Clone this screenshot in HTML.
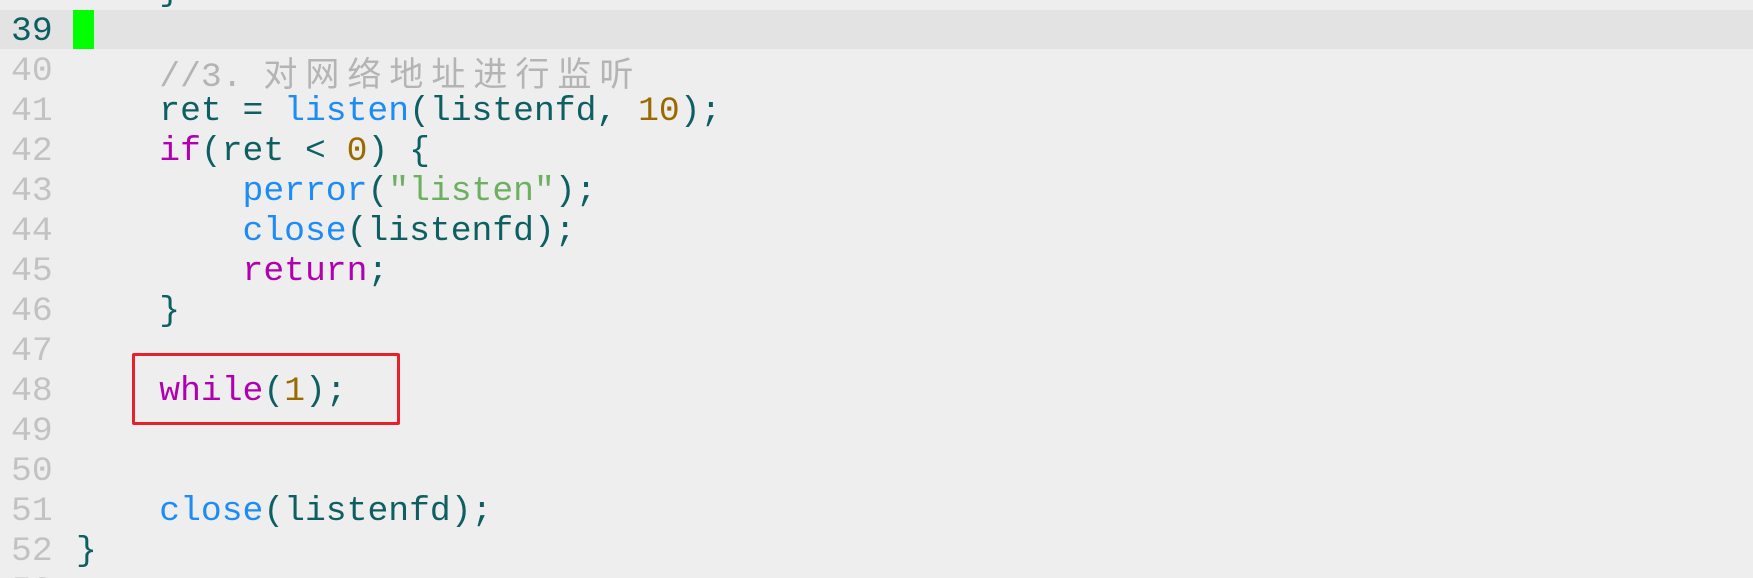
<!DOCTYPE html>
<html><head><meta charset="utf-8"><style>
html,body{margin:0;padding:0;width:1753px;height:578px;overflow:hidden;background:#eeeeee;}
#wrap{position:relative;width:1753px;height:578px;overflow:hidden;}
.row{position:absolute;left:0;width:1753px;height:40px;line-height:44px;font-family:"Liberation Mono","Noto Sans CJK SC",monospace;font-size:34.7px;white-space:pre;overflow:hidden;}
.ln{position:absolute;left:11px;top:0;color:#c2c2c2;}
.code{position:absolute;left:76px;top:0;color:#0e5f62;}
.cur{background:#e3e3e3;}
.cur .ln{color:#0e5f62;}
.b{color:#1e8cf5}.p{color:#b000b0}.n{color:#9a6a00}.s{color:#6cb060}.c{color:#b4b4b4}
.cjk{letter-spacing:8px;font-family:"Noto Sans CJK SC",sans-serif;font-size:34px;}
</style></head><body><div id="wrap">
<div class="row" style="top:-30px"><span class="code">    }</span></div>
<div class="row cur" style="top:10px;height:39px"><span class="ln">39</span><span style="position:absolute;left:73px;top:0;width:21px;height:39px;background:#00ff00"></span></div>
<div class="row" style="top:50px"><span class="ln">40</span><span class="code c">    //3. <span class="cjk">对网络地址进行监听</span></span></div>
<div class="row" style="top:90px"><span class="ln">41</span><span class="code">    ret = <span class="b">listen</span>(listenfd, <span class="n">10</span>);</span></div>
<div class="row" style="top:130px"><span class="ln">42</span><span class="code">    <span class="p">if</span>(ret &lt; <span class="n">0</span>) {</span></div>
<div class="row" style="top:170px"><span class="ln">43</span><span class="code">        <span class="b">perror</span>(<span class="s">"listen"</span>);</span></div>
<div class="row" style="top:210px"><span class="ln">44</span><span class="code">        <span class="b">close</span>(listenfd);</span></div>
<div class="row" style="top:250px"><span class="ln">45</span><span class="code">        <span class="p">return</span>;</span></div>
<div class="row" style="top:290px"><span class="ln">46</span><span class="code">    }</span></div>
<div class="row" style="top:330px"><span class="ln">47</span></div>
<div class="row" style="top:370px"><span class="ln">48</span><span class="code">    <span class="p">while</span>(<span class="n">1</span>);</span></div>
<div class="row" style="top:410px"><span class="ln">49</span></div>
<div class="row" style="top:450px"><span class="ln">50</span></div>
<div class="row" style="top:490px"><span class="ln">51</span><span class="code">    <span class="b">close</span>(listenfd);</span></div>
<div class="row" style="top:530px"><span class="ln">52</span><span class="code">}</span></div>
<div class="row" style="top:570px;height:8px"><span class="ln">53</span></div>
<div style="position:absolute;left:132px;top:353px;width:262px;height:66px;border:3px solid #e8202a;border-radius:2px;"></div>
</div></body></html>
